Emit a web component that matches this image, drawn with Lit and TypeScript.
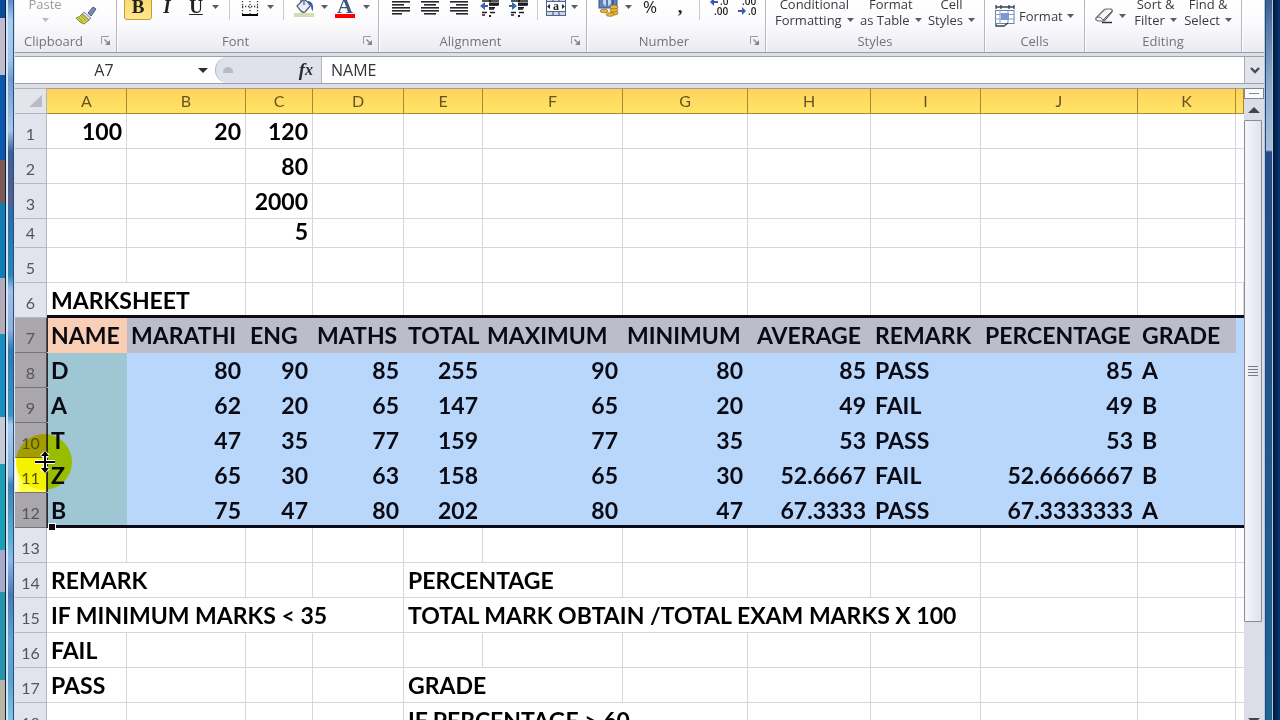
import { LitElement, html, css, svg, nothing, TemplateResult } from "lit";
import { customElement } from "lit/decorators.js";
import { classMap } from "lit/directives/class-map.js";

type Cell = { text: string; span?: number; num?: boolean; mid?: boolean };
type Row = { n: number; cells: Record<number, Cell> };

const COLUMNS = [
  { name: "A", width: 80 },
  { name: "B", width: 119 },
  { name: "C", width: 67 },
  { name: "D", width: 91 },
  { name: "E", width: 79 },
  { name: "F", width: 140 },
  { name: "G", width: 125 },
  { name: "H", width: 123 },
  { name: "I", width: 110 },
  { name: "J", width: 157 },
  { name: "K", width: 98 },
];

const t = (text: string, span = 1): Cell => ({ text, span });
const n = (text: string): Cell => ({ text, num: true });

const student = (
  name: string,
  marks: string[],
  average: string,
  remark: string,
  percentage: string,
  grade: string
): Record<number, Cell> => {
  const cells: Record<number, Cell> = { 0: t(name) };
  marks.forEach((m, i) => (cells[i + 1] = n(m)));
  cells[7] = n(average);
  cells[8] = t(remark);
  cells[9] = n(percentage);
  cells[10] = t(grade);
  return cells;
};

const HEADINGS = ["NAME", "MARATHI", "ENG", "MATHS", "TOTAL", "MAXIMUM", "MINIMUM", "AVERAGE", "REMARK", "PERCENTAGE", "GRADE"];

const ROWS: Row[] = [
  { n: 1, cells: { 0: n("100"), 1: n("20"), 2: n("120") } },
  { n: 2, cells: { 2: n("80") } },
  { n: 3, cells: { 2: n("2000") } },
  { n: 4, cells: { 2: n("5") } },
  { n: 5, cells: {} },
  { n: 6, cells: { 0: t("MARKSHEET", 2) } },
  { n: 7, cells: Object.fromEntries(HEADINGS.map((h, i) => [i, { text: h, mid: h === "AVERAGE" }])) },
  { n: 8, cells: student("D", ["80", "90", "85", "255", "90", "80"], "85", "PASS", "85", "A") },
  { n: 9, cells: student("A", ["62", "20", "65", "147", "65", "20"], "49", "FAIL", "49", "B") },
  { n: 10, cells: student("T", ["47", "35", "77", "159", "77", "35"], "53", "PASS", "53", "B") },
  { n: 11, cells: student("Z", ["65", "30", "63", "158", "65", "30"], "52.6667", "FAIL", "52.6666667", "B") },
  { n: 12, cells: student("B", ["75", "47", "80", "202", "80", "47"], "67.3333", "PASS", "67.3333333", "A") },
  { n: 13, cells: {} },
  { n: 14, cells: { 0: t("REMARK", 2), 4: t("PERCENTAGE", 2) } },
  { n: 15, cells: { 0: t("IF MINIMUM MARKS < 35", 4), 4: t("TOTAL MARK OBTAIN /TOTAL EXAM MARKS X 100", 5) } },
  { n: 16, cells: { 0: t("FAIL") } },
  { n: 17, cells: { 0: t("PASS"), 4: t("GRADE", 2) } },
  { n: 18, cells: { 4: t("IF PERCENTAGE > 60", 3) } },
];

const caret = html`<svg class="caret" width="7" height="4" viewBox="0 0 7 4"><path d="M0 0h7L3.5 4z" fill="#5b5b63" /></svg>`;

const lines = (xs: [number, number][]) =>
  svg`${xs.map(([x, w], i) => svg`<rect x=${x} y=${i * 3} width=${w} height="1.6" fill="#26262c" />`)}`;

const ICONS = {
  alignLeft: html`<svg width="18" height="18" viewBox="0 0 18 18">${lines([[0, 12], [0, 18], [0, 12], [0, 18], [0, 18], [0, 10]])}</svg>`,
  alignCenter: html`<svg width="18" height="18" viewBox="0 0 18 18">${lines([[3, 12], [0, 18], [3, 12], [0, 18], [0, 18], [3, 12]])}</svg>`,
  alignRight: html`<svg width="18" height="18" viewBox="0 0 18 18">${lines([[6, 12], [0, 18], [6, 12], [0, 18], [0, 18], [6, 12]])}</svg>`,
  outdent: html`<svg width="20" height="20" viewBox="0 0 20 20">
    <path d="M2 4h17M9 8h9M9 12h5M2 15.500h5M10 15.500h5M2 18h3" stroke="#1d1d22" stroke-width="1.500" />
    <path d="M9 5.500h10v3H9zM9 10h6v1.500H9zM9 18h2v2H9zM9 0h2v5H9z" fill="#1d1d22" />
    <path d="M0 9l5-4v3h3v2H5v3z" fill="#3f5fae" /></svg>`,
  indent: html`<svg width="20" height="20" viewBox="0 0 20 20">
    <path d="M2 4h17M9 8h9M9 12h5M2 15.500h5M10 15.500h5M2 18h3" stroke="#1d1d22" stroke-width="1.500" />
    <path d="M9 5.500h10v3H9zM9 10h6v1.500H9zM9 18h2v2H9zM9 0h2v5H9z" fill="#1d1d22" />
    <path d="M8 9L3 5v3H0v2h3v3z" fill="#2f6bab" /></svg>`,
  borders: html`<svg width="18" height="20" viewBox="0 0 18 20">
    <path d="M1 1h16M1 9.500h16M1.500 1v16M9 1v16M16.500 1v16" stroke="#3c3c44" stroke-width="1.300" stroke-dasharray="1.300 1.700" fill="none" />
    <path d="M1 18h16" stroke="#000" stroke-width="2" /></svg>`,
  fill: html`<svg width="20" height="22" viewBox="0 0 20 22">
    <rect x="0" y="17" width="20" height="4" fill="#d3dcb4" />
    <path d="M3 10l7-7 7 6-6 7q-2 1-4-1z" fill="#e8edf7" stroke="#4a5878" stroke-width="1.200" />
    <path d="M10 9V2q-2-3-3 0v4" fill="none" stroke="#4a5878" stroke-width="1.200" />
    <path d="M14 5q6 0 5 10-2-1-2-5l-3-2z" fill="#3c5ca8" /></svg>`,
  merge: html`<svg width="20" height="20" viewBox="0 0 20 20">
    <rect x="0.500" y="0.500" width="19" height="18" fill="#c9d7ec" stroke="#4f6288" />
    <path d="M7 0v4M13 0v4M7 15v4M13 15v4M0 4.500h20M0 14.500h20" stroke="#4f6288" stroke-width="1.200" />
    <rect x="1" y="5" width="18" height="9" fill="#fff" />
    <path d="M1 9.500l3-2.500v5zM19 9.500l-3-2.500v5z" fill="#222c48" />
    <text x="10" y="13" text-anchor="middle" font-family="Liberation Serif, serif" font-weight="700" font-size="12" fill="#222">a</text></svg>`,
  currency: html`<svg width="22" height="20" viewBox="0 0 22 20">
    <rect x="1" y="0" width="18" height="11" fill="#5f82bf" stroke="#35558f" />
    <ellipse cx="9" cy="5" rx="4" ry="4" fill="#c6d7ef" /><path d="M9 1v8M15 2v6" stroke="#35558f" stroke-width="1.500" />
    <g fill="#e7b93c" stroke="#8b6714" stroke-width="0.700">
      <ellipse cx="16" cy="16" rx="4" ry="2" /><ellipse cx="16" cy="13" rx="4" ry="2" /><ellipse cx="16" cy="10" rx="4" ry="2" />
      <ellipse cx="6" cy="14" rx="4" ry="1.700" /><ellipse cx="12" cy="17.500" rx="4" ry="1.800" /></g></svg>`,
  decMore: html`<svg width="20" height="20" viewBox="0 0 20 20"><path d="M0 5l4-4v3h4v2h-4v3z" fill="#3a58b0" />
    <g font-family="Open Sans, sans-serif" font-size="10" font-weight="600" fill="#222"><text x="10" y="8">.0</text><text x="4" y="18">.00</text></g></svg>`,
  decLess: html`<svg width="20" height="20" viewBox="0 0 20 20"><path d="M8 14l-4-4v3h-4v2h4v3z" fill="#3a58b0" />
    <g font-family="Open Sans, sans-serif" font-size="10" font-weight="600" fill="#222"><text x="4" y="8">.00</text><text x="10" y="18">.0</text></g></svg>`,
  brush: html`<svg width="22" height="20" viewBox="0 0 22 20">
    <path d="M13 7l5-6 3 2-5 7z" fill="#7c8cae" stroke="#4c5a7c" />
    <path d="M9 6l7 6-2 2-7-6z" fill="#d6dce8" stroke="#6b7690" stroke-width="0.800" />
    <path d="M7 8l7 6-5 4q-4-1-8-6 4-1 6-4z" fill="#d3cf4e" stroke="#86862c" />
    <path d="M4 12l4 4M6 10l5 5" stroke="#9d9a2e" /></svg>`,
  format: html`<svg width="20" height="22" viewBox="0 0 20 22">
    <path d="M1 2h18M1 0v4M6 0v4M14 0v4M19 0v4" stroke="#34415f" stroke-width="1.300" />
    <rect x="0.500" y="5.500" width="18.500" height="13" fill="#fff" stroke="#6c7fa6" />
    <path d="M0 9.500h19M0 14h19M5 5v14M13 5v14" stroke="#8c9cbc" />
    <rect x="6" y="8" width="8" height="7" fill="#7d98d6" />
    <path d="M1 19v2h8l4-3" fill="none" stroke="#34415f" stroke-width="1.300" /></svg>`,
  eraser: html`<svg width="20" height="16" viewBox="0 0 20 16">
    <path d="M1 10l8-8q1-1 2-1h5q2 1 1 3l-7 8q-1 1-2 1h-5q-3-1-2-3z" fill="#f6f6f9" stroke="#66666f" stroke-width="1.200" />
    <path d="M2 9q4-1 6 3l9-9" fill="none" stroke="#66666f" />
    <path d="M7 14.500h10" stroke="#333" stroke-width="1.500" /></svg>`,
  launcher: html`<svg width="10" height="10" viewBox="0 0 10 10"><path d="M0.500 8V0.500H8" fill="none" stroke="#9a9aa6" />
    <path d="M3.500 3.500l4 4" stroke="#85858f" stroke-width="1.300" /><path d="M9 4v5H4z" fill="#85858f" /></svg>`,
};

@customElement("ribbon-bar")
class RibbonBar extends LitElement {
  static styles = css`
    :host {
      display: flex;
      flex: none;
      height: 52px;
      overflow: hidden;
      background: linear-gradient(#fff 0, #fbfbfd 45%, #eaebf1 100%);
      border-bottom: 1px solid #9b9ca6;
      font: 13px/16px "Open Sans", "Noto Sans", sans-serif;
      color: #3a3a44;
    }
    .group {
      box-sizing: border-box;
      flex: none;
      display: flex;
      flex-direction: column;
      justify-content: flex-end;
      border-right: 1px solid #b4b6c0;
      box-shadow: 1px 0 #fff;
    }
    .body {
      display: flex;
      align-items: flex-end;
      height: 30px;
      padding: 0 7px;
    }
    .spread {
      justify-content: space-between;
      padding: 0 9px;
    }
    .foot {
      display: grid;
      grid-template-columns: 1fr 16px;
      column-gap: 6px;
      align-items: center;
      height: 22px;
      padding-right: 2px;
      color: #73737e;
      text-align: center;
    }
    .foot.plain {
      grid-template-columns: 1fr;
      padding-right: 0;
    }
    button {
      box-sizing: border-box;
      display: flex;
      align-items: center;
      justify-content: center;
      flex: none;
      border: 1px solid transparent;
      border-radius: 3px;
      padding: 0;
      margin: 0;
      background: none;
      font: inherit;
      color: inherit;
      white-space: nowrap;
    }
    svg {
      display: block;
      flex: none;
    }
    .tool {
      height: 26px;
      margin-bottom: 10px;
      font: 700 19px/24px "Liberation Serif", serif;
      color: #222;
    }
    .on {
      background: linear-gradient(#fbd668, #fee78c);
      border-color: #c29b3a;
    }
    .italic {
      font-style: italic;
    }
    .under {
      text-decoration: underline;
    }
    .percent {
      font: 17px/24px "Open Sans", sans-serif;
    }
    .fontcolor {
      flex-direction: column;
      font-size: 22px;
      line-height: 17px;
      color: #3f5582;
    }
    .swatch {
      width: 20px;
      height: 4px;
      background: #f00;
    }
    .sep {
      flex: none;
      height: 20px;
      margin-bottom: 10px;
      background: linear-gradient(#c9cad2, #c9cad2) center / 1px 100% no-repeat;
    }
    .big {
      flex-direction: column;
      height: 32px;
      margin-bottom: 2px;
      border-width: 0;
    }
    .line {
      display: flex;
      align-items: center;
      gap: 5px;
      height: 16px;
    }
    .single {
      gap: 4px;
      height: 24px;
      margin-bottom: 2px;
    }
    .low {
      height: 24px;
      margin-bottom: 2px;
    }
    .faded {
      color: #9a9aa4;
    }
    .faded svg {
      opacity: 0.4;
    }
    .paste {
      width: 46px;
    }
  `;

  tool(label: string, width: number, content: unknown, cls = "") {
    return html`<button class="tool ${cls}" aria-label=${label} style="width:${width}px">${content}</button>`;
  }
  sep(width: number) {
    return html`<span class="sep" style="width:${width}px"></span>`;
  }
  big(a: string, b: string) {
    return html`<button class="big"><span class="line">${a}</span><span class="line">${b}${caret}</span></button>`;
  }
  group(name: string, width: number, body: TemplateResult, launcher: boolean, spread = false) {
    return html`<section class="group" aria-label=${name} style="width:${width}px">
      <div class=${classMap({ body: true, spread })}>${body}</div>
      <div class=${classMap({ foot: true, plain: !launcher })}>
        <span>${name}</span>
        ${launcher ? html`<button aria-label="${name} options">${ICONS.launcher}</button>` : nothing}
      </div>
    </section>`;
  }

  render() {
    return html`
      ${this.group("Clipboard", 102, html`
        <button class="big faded paste"><span class="line">Paste</span><span class="line">${caret}</span></button>
        <button class="low" aria-label="Format Painter" style="width:36px">${ICONS.brush}</button>`, true)}
      ${this.group("Font", 262, html`
        ${this.tool("Bold", 28, "B", "on")} ${this.tool("Italic", 30, "I", "italic")}
        ${this.tool("Underline", 28, "U", "under")} ${this.tool("Underline styles", 10, caret)} ${this.sep(18)}
        ${this.tool("Borders", 24, ICONS.borders)} ${this.tool("Border styles", 16, caret)} ${this.sep(10)}
        ${this.tool("Fill Color", 32, ICONS.fill)} ${this.tool("Fill colors", 8, caret)}
        ${this.tool("Font Color", 34, html`<span>A</span><span class="swatch"></span>`, "fontcolor")}
        ${this.tool("Font colors", 8, caret)}`, true)}
      ${this.group("Alignment", 208, html`
        ${this.tool("Align Left", 29, ICONS.alignLeft)} ${this.tool("Center", 29, ICONS.alignCenter)}
        ${this.tool("Align Right", 29, ICONS.alignRight)} ${this.tool("Decrease Indent", 34, ICONS.outdent)}
        ${this.tool("Increase Indent", 24, ICONS.indent)} ${this.sep(12)}
        ${this.tool("Merge and Center", 26, ICONS.merge)} ${this.tool("Merge options", 10, caret)}`, true)}
      ${this.group("Number", 179, html`
        ${this.tool("Accounting Format", 29, ICONS.currency)} ${this.tool("Currencies", 10, caret)}
        ${this.tool("Percent Style", 34, "%", "percent")} ${this.tool("Comma Style", 26, ",")} ${this.sep(12)}
        ${this.tool("Increase Decimal", 30, ICONS.decMore)} ${this.tool("Decrease Decimal", 26, ICONS.decLess)}`, true)}
      ${this.group("Styles", 219, html`
        ${this.big("Conditional", "Formatting")} ${this.big("Format", "as Table")} ${this.big("Cell", "Styles")}`, false, true)}
      ${this.group("Cells", 100, html`<button class="single">${ICONS.format}<span>Format</span>${caret}</button>`, false, true)}
      ${this.group("Editing", 157, html`
        <button class="single" aria-label="Clear">${ICONS.eraser}${caret}</button>
        ${this.big("Sort &", "Filter")} ${this.big("Find &", "Select")}`, false, true)}
    `;
  }
}

@customElement("formula-bar")
class FormulaBar extends LitElement {
  static styles = css`
    :host {
      display: flex;
      flex: none;
      box-sizing: border-box;
      height: 28px;
      margin-top: 3px;
      border: solid #9ea1ad;
      border-width: 1px 0;
      background: #fff;
    }
    input {
      box-sizing: border-box;
      border: 0;
      padding: 0;
      margin: 0;
      min-width: 0;
      background: none;
      color: #33333a;
      font: 16px/24px "Open Sans", "Noto Sans", sans-serif;
    }
    button {
      display: flex;
      align-items: center;
      justify-content: center;
      flex: none;
      border: 0;
      padding: 0;
      background: none;
    }
    .name {
      width: 178px;
      text-align: center;
    }
    .drop {
      width: 20px;
      margin-right: 2px;
    }
    .fxarea {
      box-sizing: border-box;
      display: flex;
      align-items: center;
      justify-content: space-between;
      width: 107px;
      padding: 0 8px 0 7px;
      border: 1px solid #b3b6c1;
      border-width: 0 1px;
      border-radius: 13px 0 0 13px;
      background: #dfe2ea;
    }
    .ball {
      width: 10px;
      height: 6px;
      border-radius: 5px 5px 0 0;
      background: #b7bac4;
    }
    .fx {
      font: italic 700 19px/24px "Liberation Serif", serif;
      color: #2c2c33;
    }
    .fx small {
      font-size: 16px;
    }
    .formula {
      flex: 1;
      padding-left: 9px;
    }
    .expand {
      width: 20px;
      border-left: 1px solid #a9acb8;
      background: #e2e4eb;
    }
  `;
  render() {
    return html`
      <input class="name" aria-label="Name box" value="A7" />
      <button class="drop" aria-label="Named cells"><svg width="10" height="5" viewBox="0 0 10 5"><path d="M0 0h10L5 5z" fill="#2f2f36" /></svg></button>
      <div class="fxarea"><span class="ball"></span><button class="fx" aria-label="Insert Function">f<small>x</small></button></div>
      <input class="formula" aria-label="Formula" value="NAME" />
      <button class="expand" aria-label="Expand formula bar"><svg width="10" height="7" viewBox="0 0 10 7"><path d="M1 1l4 4 4-4" fill="none" stroke="#4b4b55" stroke-width="2.400" /></svg></button>
    `;
  }
}

@customElement("sheet-grid")
class SheetGrid extends LitElement {
  static styles = css`
    :host {
      display: block;
      position: relative;
      overflow: hidden;
      background: #fff;
    }
    table {
      table-layout: fixed;
      width: 100%;
      border-collapse: separate;
      border-spacing: 0;
    }
    .rowhead {
      width: 32px;
    }
    th,
    td {
      box-sizing: border-box;
      padding: 0;
      white-space: nowrap;
    }
    th {
      font: 16px/24px Lato, "Open Sans", sans-serif;
      color: #55555e;
    }
    thead th {
      height: 26px;
      border: solid #a98a34;
      border-width: 1px 1px 1px 0;
      border-top-color: #9b9ca6;
      background: linear-gradient(#ffd25c, #ffe566);
      color: #6a5322;
    }
    thead .corner {
      border-color: #b0b2bc;
      background: #e3e5ec;
    }
    .corner svg {
      display: block;
      margin-left: 14px;
    }
    tbody th {
      height: 35px;
      border: solid #b6b8c4;
      border-width: 0 1px 1px 0;
      background: #e2e3ec;
      vertical-align: bottom;
      line-height: 28px;
    }
    td {
      height: 35px;
      border: solid #d6d7de;
      border-width: 0 1px 1px 0;
      padding: 4px 4px 0 4px;
      vertical-align: top;
      font: 700 23px/27px Lato, "Open Sans", sans-serif;
      color: #000;
    }
    td:last-child {
      border-right: 0;
    }
    .short th,
    .short td {
      height: 29px;
    }
    .short td {
      padding-top: 0;
      line-height: 24px;
    }
    .num {
      text-align: right;
    }
    .mid {
      text-align: center;
    }
    .above td {
      border-color: transparent;
      background: linear-gradient(#0c0c18, #0c0c18) bottom / 100% 3px no-repeat border-box,
        linear-gradient(#d6d7de, #d6d7de) right / 1px 100% no-repeat border-box;
    }
    .sel td {
      border-color: transparent;
      background: #b8d7fb;
      color: #0a0a14;
    }
    .sel th {
      background: #a9a6ac;
      border-color: #77757c;
      border-right-color: #4a4850;
    }
    .sel td.colA {
      background-color: #9ec6d3;
      box-shadow: inset 1px 0 #2c2c38;
    }
    .head td {
      background: #bcbccb;
    }
    .head td.colA {
      background: #f9ceb5;
    }
    .head td:last-child {
      background: #b8d7fb;
    }
    .last td {
      background-image: linear-gradient(#0c0c18, #0c0c18);
      background-position: bottom;
      background-size: 100% 3px;
      background-repeat: no-repeat;
      background-origin: border-box;
    }
    .hover th {
      background: linear-gradient(90deg, #fff, #ffff40 20%);
    }
    .last .colA,
    .hover th {
      position: relative;
    }
    .handle {
      position: absolute;
      left: 1px;
      bottom: -4px;
      width: 6px;
      height: 6px;
      border: 1px solid #fff;
      background: #0c0c18;
    }
    .spot {
      position: absolute;
      z-index: 1;
      left: 1px;
      top: -24px;
      width: 56px;
      height: 56px;
      border-radius: 50%;
      background: #f4f200;
      mix-blend-mode: multiply;
    }
    .cursor {
      position: absolute;
      z-index: 2;
      left: 19px;
      top: -7px;
    }
  `;

  cells(row: Row) {
    const out: TemplateResult[] = [];
    for (let c = 0; c <= COLUMNS.length; ) {
      const cell = row.cells[c];
      const span = cell?.span ?? 1;
      out.push(html`<td colspan=${span} class=${classMap({ num: !!cell?.num, mid: !!cell?.mid, colA: c === 0 })}>${cell?.text ?? nothing}${
        row.n === 12 && c === 0 ? html`<span class="handle"></span>` : nothing
      }</td>`);
      c += span;
    }
    return out;
  }

  pointer() {
    return html`<span class="spot"></span>
      <svg class="cursor" width="22" height="22" viewBox="0 0 22 22">
        <path d="M1 11h20M11 2v18M7.500 5.500L11 2l3.500 3.500M7.500 16.500L11 20l3.500-3.500" fill="none" stroke="#fff" stroke-width="4" />
        <path d="M1 11h20M11 2v18" stroke="#000" stroke-width="2" />
        <path d="M11 0l4 5h-8zM11 22l4-5h-8z" fill="#000" />
      </svg>`;
  }

  render() {
    return html`<table>
      <colgroup>
        <col class="rowhead" />
        ${COLUMNS.map((c) => html`<col style="width:${c.width}px" />`)}
        <col />
      </colgroup>
      <thead>
        <tr>
          <th class="corner"><svg width="14" height="14" viewBox="0 0 14 14"><path d="M13 1v12H0z" fill="#b9bcc6" /></svg></th>
          ${COLUMNS.map((c) => html`<th scope="col">${c.name}</th>`)}
          <th></th>
        </tr>
      </thead>
      <tbody>
        ${ROWS.map(
          (r) => html`<tr
            class=${classMap({
              short: r.n === 4,
              above: r.n === 6,
              head: r.n === 7,
              sel: r.n >= 7 && r.n <= 12,
              hover: r.n === 11,
              last: r.n === 12,
            })}
          >
            <th scope="row">${r.n}${r.n === 11 ? this.pointer() : nothing}</th>
            ${this.cells(r)}
          </tr>`
        )}
      </tbody>
    </table>`;
  }
}

@customElement("scroll-strip")
class ScrollStrip extends LitElement {
  static styles = css`
    :host {
      display: flex;
      flex-direction: column;
      background: #dcdde6;
    }
    .split {
      box-sizing: border-box;
      display: grid;
      place-items: center;
      height: 11px;
      border: 1px solid #85868f;
      background: #fbfbfd;
    }
    .split::after {
      content: "";
      width: 10px;
      height: 1px;
      background: #85868f;
    }
    button {
      display: grid;
      place-items: center;
      flex: none;
      height: 21px;
      border: 0;
      padding: 0;
      background: none;
    }
    .thumb {
      box-sizing: border-box;
      display: flex;
      flex-direction: column;
      align-items: center;
      justify-content: center;
      gap: 2px;
      flex: 502;
      width: 18px;
      border: 1px solid #8a8b96;
      border-radius: 1px;
      background: linear-gradient(90deg, #f6f6fa, #dfe1ec);
    }
    .thumb i {
      width: 10px;
      height: 1px;
      background: #777a88;
    }
    .rest {
      flex: 93;
    }
    .down {
      height: 5px;
      align-items: end;
    }
  `;
  render() {
    return html`<div class="split"></div>
      <button aria-label="Scroll up"><svg width="12" height="6" viewBox="0 0 12 6"><path d="M0 6h12L6 0z" fill="#44444e" /></svg></button>
      <div class="thumb"><i></i><i></i><i></i><i></i></div>
      <div class="rest"></div>
      <button class="down" aria-label="Scroll down"><svg width="12" height="2" viewBox="0 0 12 2"><path d="M0 0h12l-2 2H2z" fill="#44444e" /></svg></button>`;
  }
}

@customElement("app-root")
class AppRoot extends LitElement {
  static styles = css`
    :host {
      display: grid;
      grid-template: minmax(0, 1fr) / 15px minmax(0, 1fr) 16px;
      height: 100vh;
      overflow: hidden;
    }
    .left,
    .right {
      display: flex;
    }
    .desk {
      box-sizing: border-box;
      width: 6px;
      border-right: 1px solid #10203a;
      background: linear-gradient(#0a4a9c 0 18px, #c2bccb 18px 75px, #0a58ae 75px 160px, #7d5a52 160px 203px, #0f7cb4 203px 278px, #b5acb8 278px 334px, #1a8fc4 334px 417px, #c9cbd4 417px 464px, #1b9fb4 464px 550px, #a7aac8 550px 592px, #2596ad 592px 680px, #b9b7a4 680px);
    }
    .glass {
      box-sizing: border-box;
      width: 9px;
      border: solid #d3e6f7;
      border-width: 0 1px 0 2px;
      box-shadow: inset -1px 0 #2d4c78;
      background: linear-gradient(#5f88c8 0, #a8cdf0 20px, #9fc4ea 60px, #6f9bd0 80px, #a8c9ea 130px, #3f5f94 152px, #5a5d88 200px, #2a6ea8 210px, #2a86b8 275px, #a3bde6 290px, #8fb0dd 330px, #2a7cb4 350px, #3c94c4 415px, #a9cdec 425px, #7fb0da 475px, #3a82b0 485px, #5fb0d4 540px, #8db6e8 560px, #4a78b4 595px, #5ba8d0 640px, #5aa0cc 680px, #86c4e4 100%);
    }
    .app {
      display: flex;
      flex-direction: column;
      min-width: 0;
      min-height: 0;
      background: #dddfe7;
    }
    .work {
      display: grid;
      grid-template: minmax(0, 1fr) / minmax(0, 1fr) 20px;
      flex: 1;
      min-height: 0;
      margin-top: 4px;
    }
    .rim {
      box-sizing: border-box;
      width: 9px;
      border: solid #a9cdec;
      border-width: 0 1px;
      box-shadow: inset 1px 0 #26466f;
      background: linear-gradient(#3f5f8c 0, #5d7ea8 30px, #8ba6c8 80px, #a9bed8 150px, #254a88 152px, #22568f 60%, #1f6594 100%);
    }
    .navy {
      flex: 1;
      border-left: 2px solid #0a1a34;
      background: linear-gradient(90deg, #04224e, #063474);
    }
  `;
  render() {
    return html`
      <div class="left"><div class="desk"></div><div class="glass"></div></div>
      <main class="app">
        <ribbon-bar></ribbon-bar>
        <formula-bar></formula-bar>
        <div class="work"><sheet-grid></sheet-grid><scroll-strip></scroll-strip></div>
      </main>
      <div class="right"><div class="rim"></div><div class="navy"></div></div>
    `;
  }
}
